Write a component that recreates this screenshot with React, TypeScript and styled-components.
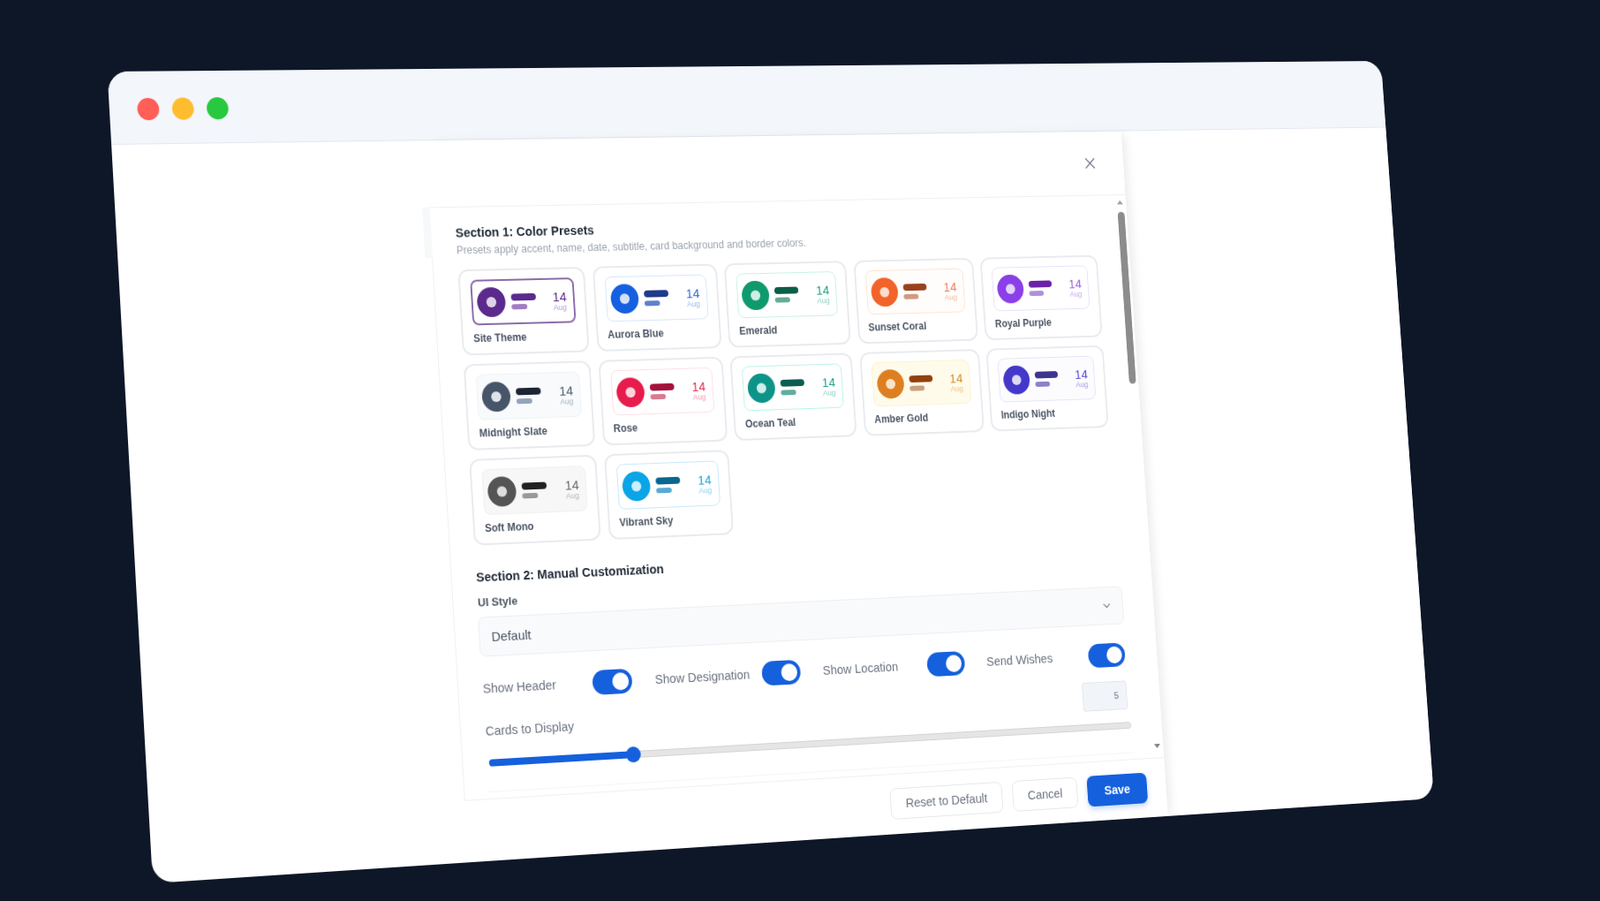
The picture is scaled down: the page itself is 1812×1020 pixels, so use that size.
import React from "react";
import styled, { createGlobalStyle } from "styled-components";
import { X, ChevronDown } from "lucide-react";

const Global = createGlobalStyle`
  html, body { margin: 0; padding: 0; background: #0e1728; }
  body { font-family: "Liberation Sans", Arial, sans-serif; overflow: hidden; }
  * { box-sizing: border-box; }
`;

const Stage = styled.div`
  width: 1812px;
  height: 1020px;
  overflow: hidden;
  background: #0e1728;
`;

const BrowserWindow = styled.div`
  width: 1600px;
  height: 900px;
  border-radius: 24px;
  overflow: hidden;
  background: #fff;
  display: flex;
  flex-direction: column;
  transform-origin: 0 0;
  transform: matrix3d(
    0.998775, -0.003211, 0, 0.00006216,
    0.055306, 1.01, 0, -0.00001108,
    0, 0, 1, 0,
    121.5, 81, 0, 1
  );
  filter: blur(0.65px);
`;

const TitleBar = styled.div`
  flex: none;
  height: 82px;
  padding: 3px 32px 0;
  display: flex;
  align-items: center;
  gap: 15px;
  background: #f3f6fa;
  border-bottom: 1px solid #e2e8f0;
`;

const Dot = styled.span<{ $color: string }>`
  width: 25px;
  height: 25px;
  border-radius: 50%;
  background: ${(p) => p.$color};
`;

const Body = styled.div`
  flex: 1;
  min-height: 0;
  padding-left: 366px;
  display: flex;
`;

const Modal = styled.div`
  width: 876px;
  display: flex;
  flex-direction: column;
  background: #fff;
  box-shadow: 8px 0 12px -4px rgba(15, 23, 42, 0.09);
`;

const ModalHeader = styled.div`
  flex: none;
  height: 76px;
  padding-right: 33px;
  display: flex;
  align-items: center;
  justify-content: flex-end;
  color: #6b7280;
`;

const Pane = styled.div`
  flex: none;
  height: 672px;
  display: flex;
  border-top: 1px solid #eef0f3;
  border-left: 1px solid #eff0f3;
  position: relative;
  &::before {
    content: "";
    position: absolute;
    left: -9px;
    top: -1px;
    width: 9px;
    height: 58px;
    background: #f7f8fa;
  }
`;

const Content = styled.div`
  flex: 1;
  padding: 19px 0 0 29px;
  display: flex;
  flex-direction: column;
`;

const SectionTitle = styled.h2<{ $top?: number }>`
  margin: ${(p) => p.$top ?? 0}px 0 0;
  font-size: 14.5px;
  line-height: 20px;
  font-weight: 700;
  color: #1f2937;
`;

const Hint = styled.p`
  margin: 3px 0 0;
  font-size: 12.3px;
  line-height: 14px;
  color: #9ca3af;
`;

const PresetGrid = styled.div`
  margin-top: 15px;
  display: grid;
  grid-template-columns: repeat(5, 153px);
  grid-auto-rows: 98px;
  gap: 10px 9.5px;
`;

const PresetCard = styled.div`
  border: 2px solid #e8eaee;
  border-radius: 12px;
  padding: 10px 12px 0;
  display: flex;
  flex-direction: column;
  background: #fff;
`;

const Preview = styled.div<{ $bg: string; $border: string; $selected?: boolean }>`
  height: 52px;
  padding: 0 8px 0 5px;
  display: flex;
  align-items: center;
  gap: 7px;
  border-radius: 8px;
  background: ${(p) => p.$bg};
  border: ${(p) => (p.$selected ? 2 : 1)}px solid ${(p) => p.$border};
`;

const Donut = styled.span<{ $color: string; $hole: string }>`
  flex: none;
  width: 34px;
  height: 34px;
  border-radius: 50%;
  background: ${(p) => p.$color};
  display: flex;
  align-items: center;
  justify-content: center;
  &::after {
    content: "";
    width: 12px;
    height: 12px;
    border-radius: 50%;
    background: ${(p) => p.$hole};
  }
`;

const Bars = styled.div`
  flex: 1;
  display: flex;
  flex-direction: column;
  gap: 4px;
`;

const Bar = styled.span<{ $color: string; $w: number; $h: number }>`
  display: block;
  width: ${(p) => p.$w}px;
  height: ${(p) => p.$h}px;
  border-radius: 4px;
  background: ${(p) => p.$color};
`;

const DateBox = styled.div<{ $color: string; $sub: string }>`
  display: flex;
  flex-direction: column;
  align-items: center;
  color: ${(p) => p.$color};
  font-size: 15px;
  line-height: 15px;
  & small {
    font-size: 9px;
    line-height: 10px;
    color: ${(p) => p.$sub};
  }
`;

const PresetName = styled.div`
  margin-top: 8px;
  font-size: 12px;
  line-height: 15px;
  font-weight: 700;
  color: #4b5563;
  white-space: nowrap;
`;

const FieldLabel = styled.label`
  display: block;
  margin-top: 11px;
  font-size: 13px;
  line-height: 16px;
  font-weight: 700;
  color: #4b5563;
`;

const Select = styled.div`
  margin: 8px 0 0 -1px;
  width: 807px;
  height: 45px;
  padding: 0 13px 0 14px;
  display: flex;
  align-items: center;
  justify-content: space-between;
  border: 1px solid #eceef2;
  border-radius: 8px;
  background: #f8fafc;
  font-size: 15px;
  color: #4b5563;
  & svg {
    color: #6b7280;
  }
`;

const ToggleRow = styled.div`
  margin-top: 22px;
  width: 804px;
  display: grid;
  grid-template-columns: repeat(4, 180px);
  column-gap: 28px;
`;

const ToggleItem = styled.div`
  height: 28px;
  display: flex;
  align-items: center;
  justify-content: space-between;
  font-size: 14.5px;
  color: #6b7280;
`;

const Toggle = styled.span`
  width: 48px;
  height: 28px;
  padding: 4px;
  border-radius: 14px;
  background: #1560dd;
  display: flex;
  justify-content: flex-end;
  &::after {
    content: "";
    width: 20px;
    height: 20px;
    border-radius: 50%;
    background: #fff;
  }
`;

const CountRow = styled.div`
  margin-top: 17px;
  width: 803px;
  height: 34px;
  display: flex;
  align-items: center;
  justify-content: space-between;
  font-size: 14.5px;
  color: #6b7280;
`;

const NumberBox = styled.div`
  width: 58px;
  height: 34px;
  padding-right: 10px;
  display: flex;
  align-items: center;
  justify-content: flex-end;
  background: #f1f4f9;
  border: 1px solid #e2e5ea;
  border-radius: 3px;
  font-size: 11px;
  color: #6b7280;
`;

const SliderTrack = styled.div`
  margin: 15px 0 0 2px;
  width: 804px;
  height: 8px;
  border-radius: 4px;
  background: #e5e5e5;
  border: 1px solid #d4d4d4;
  position: relative;
`;

const SliderFill = styled.div`
  height: 8px;
  margin: -1px;
  border-radius: 4px;
  background: #1560dd;
`;

const SliderThumb = styled.span`
  position: absolute;
  top: 50%;
  width: 18px;
  height: 18px;
  margin: -9px 0 0 -9px;
  border-radius: 50%;
  background: #1560dd;
`;

const Fade = styled.div`
  margin-top: 28px;
  width: 806px;
  height: 1px;
  background: #f4f5f7;
`;

const ScrollBar = styled.div`
  flex: none;
  width: 16px;
  padding: 6px 0 11px;
  display: flex;
  flex-direction: column;
  align-items: center;
`;

const Arrow = styled.span<{ $down?: boolean }>`
  width: 0;
  height: 0;
  border-left: 4px solid transparent;
  border-right: 4px solid transparent;
  ${(p) => (p.$down ? "margin-top: auto; border-top: 5px solid #808080;" : "border-bottom: 5px solid #a0a0a0;")}
`;

const ScrollThumb = styled.span`
  margin-top: 9px;
  width: 9px;
  height: 206px;
  border-radius: 5px;
  background: #8c8c8c;
`;

const Footer = styled.div`
  flex: 1;
  border-top: 1px solid #eef0f3;
  padding: 16px 25px 0 0;
  display: flex;
  justify-content: flex-end;
  align-items: flex-start;
  gap: 13px;
`;

const Button = styled.button<{ $w: number; $primary?: boolean }>`
  width: ${(p) => p.$w}px;
  height: 36px;
  border-radius: 8px;
  font-family: inherit;
  font-size: 14.5px;
  font-weight: ${(p) => (p.$primary ? 700 : 400)};
  color: ${(p) => (p.$primary ? "#fff" : "#6b7280")};
  background: ${(p) => (p.$primary ? "#1560dd" : "#fff")};
  border: ${(p) => (p.$primary ? "none" : "1.5px solid #e5e7eb")};
  box-shadow: ${(p) => (p.$primary ? "0 3px 6px rgba(21, 96, 221, 0.25)" : "none")};
`;

type Preset = {
  name: string; accent: string; dark: string; soft: string; date: string; sub: string;
  hole: string; bg: string; border: string; selected?: boolean;
};

const presets: Preset[] = [
  { name: "Site Theme", accent: "#5b2a8c", dark: "#5b2a8c", soft: "#a27cc0", date: "#5b2a8c", sub: "#b59ccd", hole: "#ddd3e8", bg: "#fff", border: "#8a6aa8", selected: true },
  { name: "Aurora Blue", accent: "#1560e0", dark: "#1e3a8a", soft: "#5f80cc", date: "#2f68cf", sub: "#98b6ea", hole: "#d3e0f7", bg: "#fff", border: "#d6e6fb" },
  { name: "Emerald", accent: "#0f9a6e", dark: "#0b5e48", soft: "#65ab94", date: "#1ca07c", sub: "#8bd2b9", hole: "#cfeee2", bg: "#fff", border: "#c4f3e2" },
  { name: "Sunset Coral", accent: "#f2632a", dark: "#98411f", soft: "#d29a82", date: "#ef7d5f", sub: "#f5b9a2", hole: "#fcdccb", bg: "#fffdfb", border: "#fde4d2" },
  { name: "Royal Purple", accent: "#8b3fe8", dark: "#6b21a8", soft: "#ae8fdd", date: "#9a5ee6", sub: "#c4a5f0", hole: "#e2d3fa", bg: "#fff", border: "#e8e0fa" },
  { name: "Midnight Slate", accent: "#475569", dark: "#1a2433", soft: "#94a3b8", date: "#4b5a6e", sub: "#a8b2c0", hole: "#dfe4ea", bg: "#f8fafc", border: "#eff2f5" },
  { name: "Rose", accent: "#e81c4c", dark: "#a3123a", soft: "#d97a93", date: "#e3284f", sub: "#f29ab0", hole: "#fbd5de", bg: "#fff", border: "#fde0e5" },
  { name: "Ocean Teal", accent: "#0d9488", dark: "#0c5e52", soft: "#5fae9f", date: "#1f9f92", sub: "#86d0c6", hole: "#cdeeea", bg: "#fff", border: "#b9f3ea" },
  { name: "Amber Gold", accent: "#dd7f20", dark: "#92400e", soft: "#c9a07c", date: "#d98a2a", sub: "#ecc389", hole: "#fbe3c6", bg: "#fffbeb", border: "#fef2cc" },
  { name: "Indigo Night", accent: "#4338ca", dark: "#3d3390", soft: "#8a82c8", date: "#5148cf", sub: "#a09ae0", hole: "#dcd9f6", bg: "#fcfcff", border: "#e2e4fa" },
  { name: "Soft Mono", accent: "#555555", dark: "#222222", soft: "#999999", date: "#666666", sub: "#b5b5b5", hole: "#dddddd", bg: "#f7f7f7", border: "#f0f0f0" },
  { name: "Vibrant Sky", accent: "#0aa5e6", dark: "#0b6690", soft: "#59a9d4", date: "#1ba6e0", sub: "#8bd2f0", hole: "#cdeefb", bg: "#fff", border: "#c4e9fb" },
];

const toggles = ["Show Header", "Show Designation", "Show Location", "Send Wishes"];

export default function App() {
  return (
    <Stage>
      <Global />
      <BrowserWindow>
        <TitleBar>
          <Dot $color="#ff5f57" />
          <Dot $color="#febc2e" />
          <Dot $color="#28c840" />
        </TitleBar>
        <Body>
          <Modal>
            <ModalHeader>
              <X size={22} strokeWidth={1.5} />
            </ModalHeader>
            <Pane>
              <Content>
                <SectionTitle>Section 1: Color Presets</SectionTitle>
                <Hint>Presets apply accent, name, date, subtitle, card background and border colors.</Hint>
                <PresetGrid>
                  {presets.map((p) => (
                    <PresetCard key={p.name}>
                      <Preview $bg={p.bg} $border={p.border} $selected={p.selected}>
                        <Donut $color={p.accent} $hole={p.hole} />
                        <Bars>
                          <Bar $color={p.dark} $w={30} $h={8} />
                          <Bar $color={p.soft} $w={19} $h={6} />
                        </Bars>
                        <DateBox $color={p.date} $sub={p.sub}>
                          14
                          <small>Aug</small>
                        </DateBox>
                      </Preview>
                      <PresetName>{p.name}</PresetName>
                    </PresetCard>
                  ))}
                </PresetGrid>
                <SectionTitle $top={26}>Section 2: Manual Customization</SectionTitle>
                <FieldLabel>UI Style</FieldLabel>
                <Select>
                  Default
                  <ChevronDown size={15} strokeWidth={1.75} />
                </Select>
                <ToggleRow>
                  {toggles.map((t) => (
                    <ToggleItem key={t}>
                      {t}
                      <Toggle />
                    </ToggleItem>
                  ))}
                </ToggleRow>
                <CountRow>
                  Cards to Display
                  <NumberBox>5</NumberBox>
                </CountRow>
                <SliderTrack>
                  <SliderFill style={{ width: "21.6%" }} />
                  <SliderThumb style={{ left: "21.6%" }} />
                </SliderTrack>
                <Fade />
              </Content>
              <ScrollBar>
                <Arrow />
                <ScrollThumb />
                <Arrow $down />
              </ScrollBar>
            </Pane>
            <Footer>
              <Button $w={143}>Reset to Default</Button>
              <Button $w={84}>Cancel</Button>
              <Button $w={78} $primary>Save</Button>
            </Footer>
          </Modal>
        </Body>
      </BrowserWindow>
    </Stage>
  );
}
